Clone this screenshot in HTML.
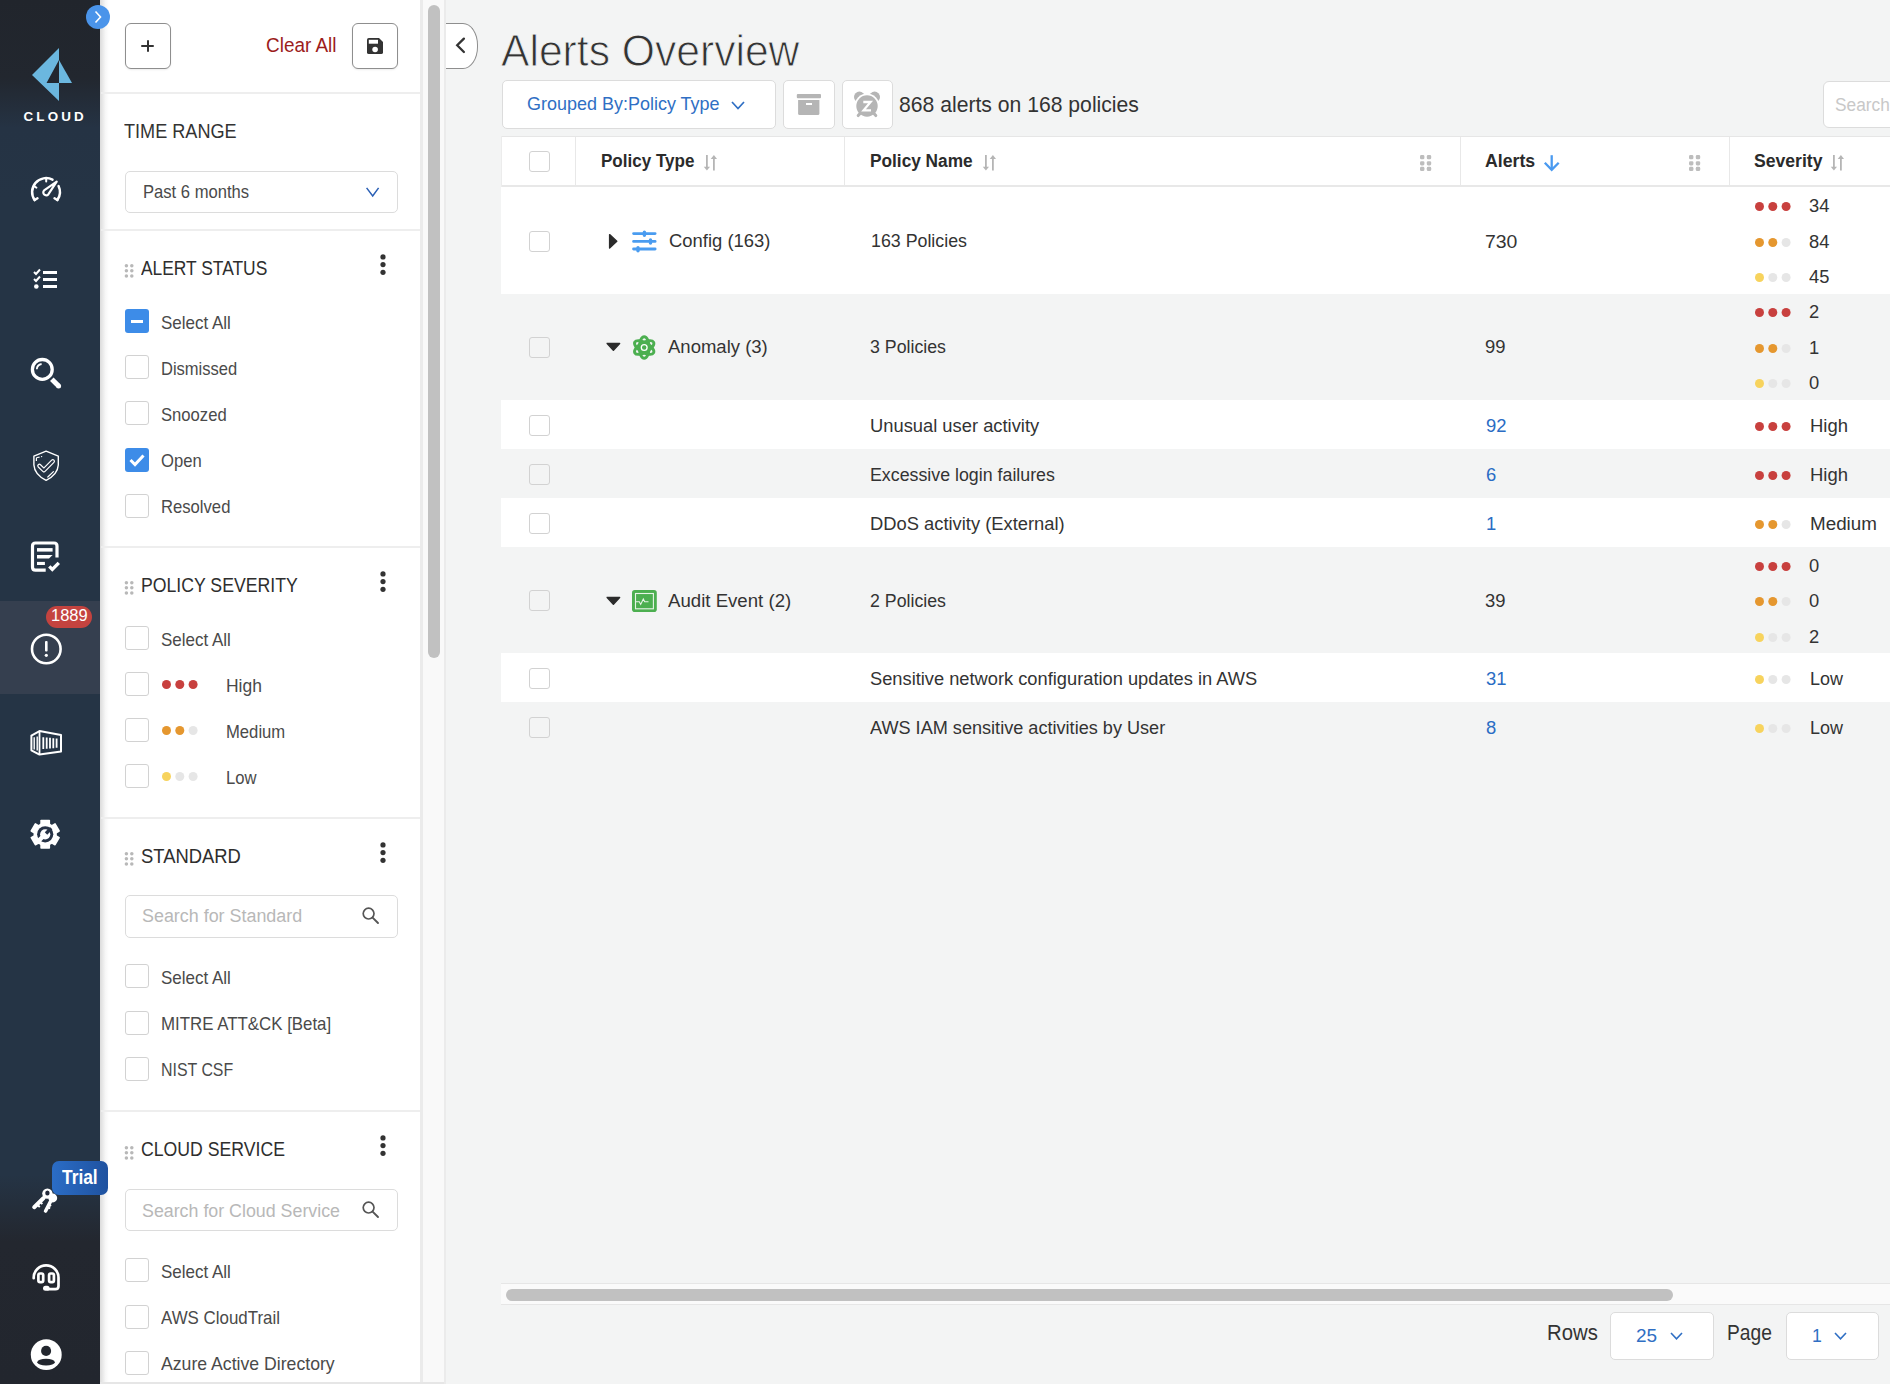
<!DOCTYPE html><html><head><meta charset="utf-8"><style>
*{box-sizing:border-box;margin:0;padding:0}
html,body{width:1890px;height:1384px;overflow:hidden;background:#f3f4f4;font-family:"Liberation Sans",sans-serif;color:#333}
.a{position:absolute}
svg{position:absolute;overflow:visible}
</style></head><body>
<div class="a" style="left:0px;top:0px;width:100px;height:1384px;background:linear-gradient(to bottom,#21252c 0px,#22272f 78px,#253344 128px,#253445 200px,#253445 1175px,#23272f 1242px,#22262e 1384px)"></div>
<div class="a" style="left:0px;top:601px;width:100px;height:93px;background:#353f4f"></div>
<div class="a" style="left:100px;top:0px;width:322px;height:1384px;background:#fff"></div>
<div class="a" style="left:100px;top:0px;width:9px;height:1384px;background:linear-gradient(to right,rgba(0,0,0,0.14),rgba(0,0,0,0.03) 60%,rgba(0,0,0,0))"></div>
<div class="a" style="left:420px;top:0px;width:24px;height:1384px;background:#f9f9f9"></div>
<div class="a" style="left:420px;top:0px;width:2.5px;height:1384px;background:#ebebeb"></div>
<div class="a" style="left:443.5px;top:0px;width:2px;height:1384px;background:#ebebeb"></div>
<div class="a" style="left:428px;top:5px;width:12px;height:653px;background:#c1c1c1;border-radius:6px"></div>
<div class="a" style="left:100px;top:1382px;width:344px;height:2px;background:#e6e6e6"></div>
<div class="a" style="left:101px;top:92px;width:319px;height:2px;background:#eeeeee"></div>
<div class="a" style="left:101px;top:229px;width:319px;height:2px;background:#eeeeee"></div>
<div class="a" style="left:101px;top:546px;width:319px;height:2px;background:#eeeeee"></div>
<div class="a" style="left:101px;top:817px;width:319px;height:2px;background:#eeeeee"></div>
<div class="a" style="left:101px;top:1110px;width:319px;height:2px;background:#eeeeee"></div>
<div class="a" style="left:125px;top:23px;width:46px;height:46px;border:1.5px solid #8e8e8e;border-radius:6px;background:#fff;box-shadow:0 1px 2px rgba(0,0,0,0.08)"></div>
<div class="a" style="left:352px;top:23px;width:46px;height:46px;border:1.5px solid #8e8e8e;border-radius:6px;background:#fff;box-shadow:0 1px 2px rgba(0,0,0,0.08)"></div>
<div class="a" style="left:141.2px;top:45px;width:12.6px;height:2.1px;background:#333;border-radius:1px"></div>
<div class="a" style="left:146.6px;top:39.9px;width:2.1px;height:12.4px;background:#333;border-radius:1px"></div>
<svg style="left:367px;top:38px" width="17" height="17" viewBox="0 0 17 17"><path d="M1.8 0 H12 L16 4 V14.2 Q16 16.1 14.2 16.1 H1.8 Q0 16.1 0 14.2 V1.8 Q0 0 1.8 0 Z" fill="#333"/><rect x="1.8" y="1.8" width="9.2" height="3.9" fill="#fff"/><circle cx="8.1" cy="11.5" r="2.8" fill="#fff"/></svg>
<div class="a" style="left:265.7px;top:35.82px;font-size:19.7px;line-height:1;color:#9c1c1c;font-weight:400;white-space:nowrap;transform-origin:0 0;transform:scaleX(0.9616)">Clear All</div>
<div class="a" style="left:123.8px;top:122.18px;font-size:19.4px;line-height:1;color:#333;font-weight:400;white-space:nowrap;transform-origin:0 0;transform:scaleX(0.9339)">TIME RANGE</div>
<div class="a" style="left:125px;top:171px;width:273px;height:42px;border:1.5px solid #dcdcdc;border-radius:5px;background:#fff"></div>
<div class="a" style="left:143.0px;top:183.95px;font-size:17.9px;line-height:1;color:#4a4a4a;font-weight:400;white-space:nowrap;transform-origin:0 0;transform:scaleX(0.9278)">Past 6 months</div>
<svg style="left:365.5px;top:187px" width="14" height="10" viewBox="0 0 14 10"><path d="M0.6 0.9 L6.7 8.9 L12.6 0.9" fill="none" stroke="#2a5fb5" stroke-width="1.5"/></svg>
<svg style="left:124px;top:264.4px" width="10" height="14" viewBox="0 0 10 14"><circle cx="2.4" cy="1.8" r="1.75" fill="#b8b8b8"/><circle cx="2.4" cy="6.85" r="1.75" fill="#b8b8b8"/><circle cx="2.4" cy="11.9" r="1.75" fill="#b8b8b8"/><circle cx="7.800000000000001" cy="1.8" r="1.75" fill="#b8b8b8"/><circle cx="7.800000000000001" cy="6.85" r="1.75" fill="#b8b8b8"/><circle cx="7.800000000000001" cy="11.9" r="1.75" fill="#b8b8b8"/></svg>
<div class="a" style="left:140.8px;top:258.82px;font-size:19.7px;line-height:1;color:#2e2e2e;font-weight:400;white-space:nowrap;transform-origin:0 0;transform:scaleX(0.8834)">ALERT STATUS</div>
<svg style="left:380px;top:253.89999999999998px" width="6" height="21" viewBox="0 0 6 21"><circle cx="3" cy="2.9" r="2.6" fill="#333"/><circle cx="3" cy="10.6" r="2.6" fill="#333"/><circle cx="3" cy="18.3" r="2.6" fill="#333"/></svg>
<div class="a" style="left:125px;top:309px;width:24px;height:24px;background:#3d8ce8;border-radius:3px"></div>
<div class="a" style="left:131px;top:319.5px;width:12px;height:3px;background:#fff"></div>
<div class="a" style="left:161.3px;top:313.52px;font-size:18.4px;line-height:1;color:#4a4a4a;font-weight:400;white-space:nowrap;transform-origin:0 0;transform:scaleX(0.9239)">Select All</div>
<div class="a" style="left:125px;top:355px;width:24px;height:24px;border:1.5px solid #d2d2d2;border-radius:3px;background:#fff"></div>
<div class="a" style="left:161.3px;top:359.72px;font-size:18.4px;line-height:1;color:#4a4a4a;font-weight:400;white-space:nowrap;transform-origin:0 0;transform:scaleX(0.8983)">Dismissed</div>
<div class="a" style="left:125px;top:401px;width:24px;height:24px;border:1.5px solid #d2d2d2;border-radius:3px;background:#fff"></div>
<div class="a" style="left:161.3px;top:405.92px;font-size:18.4px;line-height:1;color:#4a4a4a;font-weight:400;white-space:nowrap;transform-origin:0 0;transform:scaleX(0.9050)">Snoozed</div>
<div class="a" style="left:125px;top:448px;width:24px;height:24px;background:#3d8ce8;border-radius:3px"></div>
<svg style="left:125px;top:448px" width="24" height="24" viewBox="0 0 24 24"><path d="M5.5 12 L10 16.5 L18.5 7.5" fill="none" stroke="#fff" stroke-width="3"/></svg>
<div class="a" style="left:161.3px;top:452.12px;font-size:18.4px;line-height:1;color:#4a4a4a;font-weight:400;white-space:nowrap;transform-origin:0 0;transform:scaleX(0.9050)">Open</div>
<div class="a" style="left:125px;top:494px;width:24px;height:24px;border:1.5px solid #d2d2d2;border-radius:3px;background:#fff"></div>
<div class="a" style="left:161.3px;top:498.32px;font-size:18.4px;line-height:1;color:#4a4a4a;font-weight:400;white-space:nowrap;transform-origin:0 0;transform:scaleX(0.9050)">Resolved</div>
<svg style="left:124px;top:581.3px" width="10" height="14" viewBox="0 0 10 14"><circle cx="2.4" cy="1.8" r="1.75" fill="#b8b8b8"/><circle cx="2.4" cy="6.85" r="1.75" fill="#b8b8b8"/><circle cx="2.4" cy="11.9" r="1.75" fill="#b8b8b8"/><circle cx="7.800000000000001" cy="1.8" r="1.75" fill="#b8b8b8"/><circle cx="7.800000000000001" cy="6.85" r="1.75" fill="#b8b8b8"/><circle cx="7.800000000000001" cy="11.9" r="1.75" fill="#b8b8b8"/></svg>
<div class="a" style="left:140.8px;top:575.72px;font-size:19.7px;line-height:1;color:#2e2e2e;font-weight:400;white-space:nowrap;transform-origin:0 0;transform:scaleX(0.8970)">POLICY SEVERITY</div>
<svg style="left:380px;top:570.8px" width="6" height="21" viewBox="0 0 6 21"><circle cx="3" cy="2.9" r="2.6" fill="#333"/><circle cx="3" cy="10.6" r="2.6" fill="#333"/><circle cx="3" cy="18.3" r="2.6" fill="#333"/></svg>
<div class="a" style="left:125px;top:626px;width:24px;height:24px;border:1.5px solid #d2d2d2;border-radius:3px;background:#fff"></div>
<div class="a" style="left:161.3px;top:630.82px;font-size:18.4px;line-height:1;color:#4a4a4a;font-weight:400;white-space:nowrap;transform-origin:0 0;transform:scaleX(0.9226)">Select All</div>
<div class="a" style="left:125px;top:672px;width:24px;height:24px;border:1.5px solid #d2d2d2;border-radius:3px;background:#fff"></div>
<svg style="left:161.5px;top:680.0px" width="36" height="9" viewBox="0 0 36 9"><circle cx="4.5" cy="4.5" r="4.5" fill="#c8403e"/><circle cx="17.8" cy="4.5" r="4.5" fill="#c8403e"/><circle cx="31.1" cy="4.5" r="4.5" fill="#c8403e"/></svg>
<div class="a" style="left:225.8px;top:676.52px;font-size:18.4px;line-height:1;color:#4a4a4a;font-weight:400;white-space:nowrap;transform-origin:0 0;transform:scaleX(0.9490)">High</div>
<div class="a" style="left:125px;top:718px;width:24px;height:24px;border:1.5px solid #d2d2d2;border-radius:3px;background:#fff"></div>
<svg style="left:161.5px;top:726.0px" width="36" height="9" viewBox="0 0 36 9"><circle cx="4.5" cy="4.5" r="4.5" fill="#e5972f"/><circle cx="17.8" cy="4.5" r="4.5" fill="#e5972f"/><circle cx="31.1" cy="4.5" r="4.5" fill="#e6e6e6"/></svg>
<div class="a" style="left:225.8px;top:722.72px;font-size:18.4px;line-height:1;color:#4a4a4a;font-weight:400;white-space:nowrap;transform-origin:0 0;transform:scaleX(0.9050)">Medium</div>
<div class="a" style="left:125px;top:764px;width:24px;height:24px;border:1.5px solid #d2d2d2;border-radius:3px;background:#fff"></div>
<svg style="left:161.5px;top:772.0px" width="36" height="9" viewBox="0 0 36 9"><circle cx="4.5" cy="4.5" r="4.5" fill="#f7d35d"/><circle cx="17.8" cy="4.5" r="4.5" fill="#e6e6e6"/><circle cx="31.1" cy="4.5" r="4.5" fill="#e6e6e6"/></svg>
<div class="a" style="left:225.8px;top:768.92px;font-size:18.4px;line-height:1;color:#4a4a4a;font-weight:400;white-space:nowrap;transform-origin:0 0;transform:scaleX(0.9050)">Low</div>
<svg style="left:124px;top:852.1px" width="10" height="14" viewBox="0 0 10 14"><circle cx="2.4" cy="1.8" r="1.75" fill="#b8b8b8"/><circle cx="2.4" cy="6.85" r="1.75" fill="#b8b8b8"/><circle cx="2.4" cy="11.9" r="1.75" fill="#b8b8b8"/><circle cx="7.800000000000001" cy="1.8" r="1.75" fill="#b8b8b8"/><circle cx="7.800000000000001" cy="6.85" r="1.75" fill="#b8b8b8"/><circle cx="7.800000000000001" cy="11.9" r="1.75" fill="#b8b8b8"/></svg>
<div class="a" style="left:140.8px;top:846.52px;font-size:19.7px;line-height:1;color:#2e2e2e;font-weight:400;white-space:nowrap;transform-origin:0 0;transform:scaleX(0.9350)">STANDARD</div>
<svg style="left:380px;top:841.6px" width="6" height="21" viewBox="0 0 6 21"><circle cx="3" cy="2.9" r="2.6" fill="#333"/><circle cx="3" cy="10.6" r="2.6" fill="#333"/><circle cx="3" cy="18.3" r="2.6" fill="#333"/></svg>
<div class="a" style="left:125px;top:895px;width:273px;height:43px;border:1.5px solid #dcdcdc;border-radius:5px;background:#fff"></div>
<div class="a" style="left:142.0px;top:907.19px;font-size:18.8px;line-height:1;color:#b8b8b8;font-weight:400;white-space:nowrap;transform-origin:0 0;transform:scaleX(0.9530)">Search for Standard</div>
<svg style="left:362px;top:907.3px" width="17" height="17" viewBox="0 0 17 17"><circle cx="6.6" cy="6.6" r="5.4" fill="none" stroke="#555" stroke-width="1.7"/><path d="M10.6 10.6 L16 16" stroke="#555" stroke-width="1.9" stroke-linecap="round"/></svg>
<div class="a" style="left:125px;top:964px;width:24px;height:24px;border:1.5px solid #d2d2d2;border-radius:3px;background:#fff"></div>
<div class="a" style="left:161.3px;top:969.02px;font-size:18.4px;line-height:1;color:#4a4a4a;font-weight:400;white-space:nowrap;transform-origin:0 0;transform:scaleX(0.9239)">Select All</div>
<div class="a" style="left:125px;top:1011px;width:24px;height:24px;border:1.5px solid #d2d2d2;border-radius:3px;background:#fff"></div>
<div class="a" style="left:161.3px;top:1015.22px;font-size:18.4px;line-height:1;color:#4a4a4a;font-weight:400;white-space:nowrap;transform-origin:0 0;transform:scaleX(0.9167)">MITRE ATT&amp;CK [Beta]</div>
<div class="a" style="left:125px;top:1057px;width:24px;height:24px;border:1.5px solid #d2d2d2;border-radius:3px;background:#fff"></div>
<div class="a" style="left:161.3px;top:1061.42px;font-size:18.4px;line-height:1;color:#4a4a4a;font-weight:400;white-space:nowrap;transform-origin:0 0;transform:scaleX(0.8652)">NIST CSF</div>
<svg style="left:124px;top:1145.7px" width="10" height="14" viewBox="0 0 10 14"><circle cx="2.4" cy="1.8" r="1.75" fill="#b8b8b8"/><circle cx="2.4" cy="6.85" r="1.75" fill="#b8b8b8"/><circle cx="2.4" cy="11.9" r="1.75" fill="#b8b8b8"/><circle cx="7.800000000000001" cy="1.8" r="1.75" fill="#b8b8b8"/><circle cx="7.800000000000001" cy="6.85" r="1.75" fill="#b8b8b8"/><circle cx="7.800000000000001" cy="11.9" r="1.75" fill="#b8b8b8"/></svg>
<div class="a" style="left:140.8px;top:1140.12px;font-size:19.7px;line-height:1;color:#2e2e2e;font-weight:400;white-space:nowrap;transform-origin:0 0;transform:scaleX(0.8974)">CLOUD SERVICE</div>
<svg style="left:380px;top:1135.2px" width="6" height="21" viewBox="0 0 6 21"><circle cx="3" cy="2.9" r="2.6" fill="#333"/><circle cx="3" cy="10.6" r="2.6" fill="#333"/><circle cx="3" cy="18.3" r="2.6" fill="#333"/></svg>
<div class="a" style="left:125px;top:1189px;width:273px;height:42px;border:1.5px solid #dcdcdc;border-radius:5px;background:#fff"></div>
<div class="a" style="left:142.2px;top:1201.59px;font-size:18.8px;line-height:1;color:#b8b8b8;font-weight:400;white-space:nowrap;transform-origin:0 0;transform:scaleX(0.9484)">Search for Cloud Service</div>
<svg style="left:362px;top:1200.8px" width="17" height="17" viewBox="0 0 17 17"><circle cx="6.6" cy="6.6" r="5.4" fill="none" stroke="#555" stroke-width="1.7"/><path d="M10.6 10.6 L16 16" stroke="#555" stroke-width="1.9" stroke-linecap="round"/></svg>
<div class="a" style="left:125px;top:1258px;width:24px;height:24px;border:1.5px solid #d2d2d2;border-radius:3px;background:#fff"></div>
<div class="a" style="left:161.3px;top:1263.02px;font-size:18.4px;line-height:1;color:#4a4a4a;font-weight:400;white-space:nowrap;transform-origin:0 0;transform:scaleX(0.9239)">Select All</div>
<div class="a" style="left:125px;top:1305px;width:24px;height:24px;border:1.5px solid #d2d2d2;border-radius:3px;background:#fff"></div>
<div class="a" style="left:161.3px;top:1309.22px;font-size:18.4px;line-height:1;color:#4a4a4a;font-weight:400;white-space:nowrap;transform-origin:0 0;transform:scaleX(0.9193)">AWS CloudTrail</div>
<div class="a" style="left:125px;top:1351px;width:24px;height:24px;border:1.5px solid #d2d2d2;border-radius:3px;background:#fff"></div>
<div class="a" style="left:161.3px;top:1355.42px;font-size:18.4px;line-height:1;color:#4a4a4a;font-weight:400;white-space:nowrap;transform-origin:0 0;transform:scaleX(0.9602)">Azure Active Directory</div>
<div class="a" style="left:445.5px;top:23.2px;width:32.5px;height:45.8px;background:#fff;border:1.5px solid #8e8e8e;border-left:none;border-radius:0 15px 15px 0 / 0 22px 22px 0"></div>
<svg style="left:455px;top:37px" width="11" height="17" viewBox="0 0 11 17"><path d="M8.9 1.6 L2.2 8.3 L8.9 15" fill="none" stroke="#333" stroke-width="2.3" stroke-linecap="round"/></svg>
<div class="a" style="left:500.7px;top:28.85px;font-size:44px;line-height:1;color:#333;-webkit-text-stroke:0.9px #f3f4f4;font-weight:400;white-space:nowrap;transform-origin:0 0;transform:scaleX(0.9686)">Alerts Overview</div>
<div class="a" style="left:502px;top:80px;width:274px;height:49px;background:#fff;border:1.5px solid #dcdcdc;border-radius:5px"></div>
<div class="a" style="left:526.9px;top:94.62px;font-size:18.4px;line-height:1;color:#2f6fc4;font-weight:400;white-space:nowrap;transform-origin:0 0;transform:scaleX(0.9778)">Grouped By:Policy Type</div>
<svg style="left:731px;top:101px" width="14" height="9" viewBox="0 0 14 9"><path d="M1 1 L7 7.5 L13 1" fill="none" stroke="#2f6fc4" stroke-width="1.7"/></svg>
<div class="a" style="left:783px;top:80px;width:52px;height:49px;background:#fff;border:1.5px solid #dcdcdc;border-radius:5px"></div>
<div class="a" style="left:842px;top:80px;width:51px;height:49px;background:#fff;border:1.5px solid #dcdcdc;border-radius:5px"></div>
<svg style="left:796px;top:93px" width="26" height="24" viewBox="0 0 26 24"><rect x="0.8" y="0.9" width="24.2" height="4.4" rx="1" fill="#b5b5b5"/><path d="M2.1 6.9 H23.4 V20.6 Q23.4 22.1 21.9 22.1 H3.6 Q2.1 22.1 2.1 20.6 Z" fill="#b5b5b5"/><rect x="10" y="10" width="6" height="2" fill="#fff"/></svg>
<svg style="left:850px;top:90px" width="34" height="30" viewBox="0 0 34 30"><circle cx="9.4" cy="7" r="5.4" fill="#b5b5b5"/><circle cx="24.6" cy="7" r="5.4" fill="#b5b5b5"/><circle cx="17" cy="16" r="12.4" fill="#fff"/><path d="M10.5 23 L8.2 25.6" stroke="#b5b5b5" stroke-width="3" stroke-linecap="round"/><path d="M23.5 23 L25.8 25.6" stroke="#b5b5b5" stroke-width="3" stroke-linecap="round"/><circle cx="17" cy="16" r="10.7" fill="#b5b5b5"/><path d="M13.3 12 H20.6 L13.6 20.3 H21" fill="none" stroke="#fff" stroke-width="2.3" stroke-linejoin="miter"/></svg>
<div class="a" style="left:899.3px;top:93.51px;font-size:22.2px;line-height:1;color:#333;font-weight:400;white-space:nowrap;transform-origin:0 0;transform:scaleX(0.9534)">868 alerts on 168 policies</div>
<div class="a" style="left:1823px;top:81px;width:80px;height:47px;background:#fff;border:1.5px solid #dcdcdc;border-radius:6px"></div>
<div class="a" style="left:1835.0px;top:96.09px;font-size:18.8px;line-height:1;color:#c8c8c8;font-weight:400;white-space:nowrap;transform-origin:0 0;transform:scaleX(0.9200)">Search</div>
<div class="a" style="left:501px;top:136px;width:1389px;height:51px;background:#fff;border-top:1px solid #e6e6e6;border-bottom:2px solid #e8e8e8"></div>
<div class="a" style="left:575px;top:137px;width:1px;height:48px;background:#e8e8e8"></div>
<div class="a" style="left:844px;top:137px;width:1px;height:48px;background:#e8e8e8"></div>
<div class="a" style="left:1460px;top:137px;width:1px;height:48px;background:#e8e8e8"></div>
<div class="a" style="left:1729px;top:137px;width:1px;height:48px;background:#e8e8e8"></div>
<div class="a" style="left:501px;top:136px;width:1px;height:615px;background:#ececec"></div>
<div class="a" style="left:529px;top:151px;width:21px;height:21px;border:1.5px solid #d2d2d2;border-radius:3px;background:transparent"></div>
<div class="a" style="left:600.9px;top:152.39px;font-size:18.8px;line-height:1;color:#2b2b2b;font-weight:700;white-space:nowrap;transform-origin:0 0;transform:scaleX(0.9068)">Policy Type</div>
<svg style="left:703px;top:155px" width="15" height="16" viewBox="0 0 15 16"><path d="M3.9 0 V12.5" stroke="#b5b5b5" stroke-width="1.8"/><path d="M0.8 11.7 H7 L3.9 15.5 Z" fill="#b5b5b5"/><path d="M10.9 15.5 V3" stroke="#b5b5b5" stroke-width="1.8"/><path d="M7.7 3.9 H14 L10.9 0.1 Z" fill="#b5b5b5"/></svg>
<div class="a" style="left:870.4px;top:152.39px;font-size:18.8px;line-height:1;color:#2b2b2b;font-weight:700;white-space:nowrap;transform-origin:0 0;transform:scaleX(0.9185)">Policy Name</div>
<svg style="left:982px;top:155px" width="15" height="16" viewBox="0 0 15 16"><path d="M3.9 0 V12.5" stroke="#b5b5b5" stroke-width="1.8"/><path d="M0.8 11.7 H7 L3.9 15.5 Z" fill="#b5b5b5"/><path d="M10.9 15.5 V3" stroke="#b5b5b5" stroke-width="1.8"/><path d="M7.7 3.9 H14 L10.9 0.1 Z" fill="#b5b5b5"/></svg>
<svg style="left:1420px;top:154.7px" width="12" height="17" viewBox="0 0 12 17"><rect x="0" y="0" width="4.4" height="4.3" rx="1.4" fill="#bdbdbd"/><rect x="0" y="6.2" width="4.4" height="4.3" rx="1.4" fill="#bdbdbd"/><rect x="0" y="11.8" width="4.4" height="4.3" rx="1.4" fill="#bdbdbd"/><rect x="6.8" y="0" width="4.4" height="4.3" rx="1.4" fill="#bdbdbd"/><rect x="6.8" y="6.2" width="4.4" height="4.3" rx="1.4" fill="#bdbdbd"/><rect x="6.8" y="11.8" width="4.4" height="4.3" rx="1.4" fill="#bdbdbd"/></svg>
<div class="a" style="left:1485.0px;top:152.39px;font-size:18.8px;line-height:1;color:#2b2b2b;font-weight:700;white-space:nowrap;transform-origin:0 0;transform:scaleX(0.9427)">Alerts</div>
<svg style="left:1543px;top:154px" width="18" height="18" viewBox="0 0 18 18"><path d="M8.7 1.2 V15.5" stroke="#4a9af0" stroke-width="2.3"/><path d="M1.8 8.8 L8.7 15.9 L15.7 8.8" fill="none" stroke="#4a9af0" stroke-width="2.3"/></svg>
<svg style="left:1689px;top:154.7px" width="12" height="17" viewBox="0 0 12 17"><rect x="0" y="0" width="4.4" height="4.3" rx="1.4" fill="#bdbdbd"/><rect x="0" y="6.2" width="4.4" height="4.3" rx="1.4" fill="#bdbdbd"/><rect x="0" y="11.8" width="4.4" height="4.3" rx="1.4" fill="#bdbdbd"/><rect x="6.8" y="0" width="4.4" height="4.3" rx="1.4" fill="#bdbdbd"/><rect x="6.8" y="6.2" width="4.4" height="4.3" rx="1.4" fill="#bdbdbd"/><rect x="6.8" y="11.8" width="4.4" height="4.3" rx="1.4" fill="#bdbdbd"/></svg>
<div class="a" style="left:1753.7px;top:152.39px;font-size:18.8px;line-height:1;color:#2b2b2b;font-weight:700;white-space:nowrap;transform-origin:0 0;transform:scaleX(0.9372)">Severity</div>
<svg style="left:1830px;top:155px" width="15" height="16" viewBox="0 0 15 16"><path d="M3.9 0 V12.5" stroke="#b5b5b5" stroke-width="1.8"/><path d="M0.8 11.7 H7 L3.9 15.5 Z" fill="#b5b5b5"/><path d="M10.9 15.5 V3" stroke="#b5b5b5" stroke-width="1.8"/><path d="M7.7 3.9 H14 L10.9 0.1 Z" fill="#b5b5b5"/></svg>
<div class="a" style="left:501px;top:187px;width:1389px;height:107px;background:#fff"></div>
<div class="a" style="left:501px;top:294px;width:1389px;height:106px;background:#f3f4f4"></div>
<div class="a" style="left:501px;top:400px;width:1389px;height:49px;background:#fff"></div>
<div class="a" style="left:501px;top:449px;width:1389px;height:49px;background:#f3f4f4"></div>
<div class="a" style="left:501px;top:498px;width:1389px;height:49px;background:#fff"></div>
<div class="a" style="left:501px;top:547px;width:1389px;height:106px;background:#f3f4f4"></div>
<div class="a" style="left:501px;top:653px;width:1389px;height:49px;background:#fff"></div>
<div class="a" style="left:501px;top:702px;width:1389px;height:50px;background:#f3f4f4"></div>
<div class="a" style="left:529px;top:231px;width:21px;height:21px;border:1.5px solid #d2d2d2;border-radius:3px;background:transparent"></div>
<svg style="left:608px;top:233px" width="11" height="17" viewBox="0 0 11 17"><path d="M1.6 1.6 L8.8 8.3 L1.6 15 Z" fill="#2b2b2b" stroke="#2b2b2b" stroke-width="1.4" stroke-linejoin="round"/></svg>
<svg style="left:632px;top:230px" width="26" height="23" viewBox="0 0 26 23"><g stroke="#4a9cf0" stroke-linecap="round"><path d="M1.6 3.6 H23.1 M1.6 11.4 H23.1 M1.6 19 H23.1" stroke-width="2.9"/><path d="M12.4 2.2 V5.2 M18.5 9.9 V13 M6 17.7 V20.7" stroke-width="3.4"/></g></svg>
<div class="a" style="left:668.8px;top:230.63px;font-size:19.1px;line-height:1;color:#333;font-weight:400;white-space:nowrap;transform-origin:0 0;transform:scaleX(0.9650)">Config (163)</div>
<div class="a" style="left:871.0px;top:231.33px;font-size:19.1px;line-height:1;color:#333;font-weight:400;white-space:nowrap;transform-origin:0 0;transform:scaleX(0.9323)">163 Policies</div>
<div class="a" style="left:1485.1px;top:231.63px;font-size:19.1px;line-height:1;color:#333;font-weight:400;white-space:nowrap;transform-origin:0 0;transform:scaleX(1.0170)">730</div>
<svg style="left:1754.5px;top:202.0px" width="36" height="9" viewBox="0 0 36 9"><circle cx="4.5" cy="4.5" r="4.5" fill="#c8403e"/><circle cx="17.8" cy="4.5" r="4.5" fill="#c8403e"/><circle cx="31.1" cy="4.5" r="4.5" fill="#c8403e"/></svg>
<div class="a" style="left:1809.3px;top:196.13px;font-size:19.1px;line-height:1;color:#333;font-weight:400;white-space:nowrap;transform-origin:0 0;transform:scaleX(0.9600)">34</div>
<svg style="left:1754.5px;top:237.5px" width="36" height="9" viewBox="0 0 36 9"><circle cx="4.5" cy="4.5" r="4.5" fill="#e5972f"/><circle cx="17.8" cy="4.5" r="4.5" fill="#e5972f"/><circle cx="31.1" cy="4.5" r="4.5" fill="#e6e6e6"/></svg>
<div class="a" style="left:1809.3px;top:231.63px;font-size:19.1px;line-height:1;color:#333;font-weight:400;white-space:nowrap;transform-origin:0 0;transform:scaleX(0.9600)">84</div>
<svg style="left:1754.5px;top:273.0px" width="36" height="9" viewBox="0 0 36 9"><circle cx="4.5" cy="4.5" r="4.5" fill="#f7d35d"/><circle cx="17.8" cy="4.5" r="4.5" fill="#e6e6e6"/><circle cx="31.1" cy="4.5" r="4.5" fill="#e6e6e6"/></svg>
<div class="a" style="left:1809.3px;top:267.13px;font-size:19.1px;line-height:1;color:#333;font-weight:400;white-space:nowrap;transform-origin:0 0;transform:scaleX(0.9600)">45</div>
<div class="a" style="left:529px;top:337px;width:21px;height:21px;border:1.5px solid #d2d2d2;border-radius:3px;background:transparent"></div>
<svg style="left:605px;top:341px" width="17" height="11" viewBox="0 0 17 11"><path d="M2.2 2.4 H14.6 L8.4 9.2 Z" fill="#2b2b2b" stroke="#2b2b2b" stroke-width="1.5" stroke-linejoin="round"/></svg>
<svg style="left:632px;top:335px" width="25" height="26" viewBox="0 0 25 26"><g fill="none" stroke="#4caf50" stroke-width="2.9"><ellipse cx="12.2" cy="12.5" rx="10.8" ry="4.9" transform="rotate(90 12.2 12.5)"/><ellipse cx="12.2" cy="12.5" rx="10.8" ry="4.9" transform="rotate(30 12.2 12.5)"/><ellipse cx="12.2" cy="12.5" rx="10.8" ry="4.9" transform="rotate(-30 12.2 12.5)"/></g><circle cx="12.2" cy="12.5" r="4.8" fill="#4caf50"/><circle cx="12.2" cy="12.5" r="2.9" fill="none" stroke="#fff" stroke-width="1.3"/></svg>
<div class="a" style="left:668.3px;top:336.63px;font-size:19.1px;line-height:1;color:#333;font-weight:400;white-space:nowrap;transform-origin:0 0;transform:scaleX(0.9695)">Anomaly (3)</div>
<div class="a" style="left:870.3px;top:337.23px;font-size:19.1px;line-height:1;color:#333;font-weight:400;white-space:nowrap;transform-origin:0 0;transform:scaleX(0.9300)">3 Policies</div>
<div class="a" style="left:1485.1px;top:337.33px;font-size:19.1px;line-height:1;color:#333;font-weight:400;white-space:nowrap;transform-origin:0 0;transform:scaleX(0.9650)">99</div>
<svg style="left:1754.5px;top:308.0px" width="36" height="9" viewBox="0 0 36 9"><circle cx="4.5" cy="4.5" r="4.5" fill="#c8403e"/><circle cx="17.8" cy="4.5" r="4.5" fill="#c8403e"/><circle cx="31.1" cy="4.5" r="4.5" fill="#c8403e"/></svg>
<div class="a" style="left:1809.3px;top:302.13px;font-size:19.1px;line-height:1;color:#333;font-weight:400;white-space:nowrap;transform-origin:0 0;transform:scaleX(0.9600)">2</div>
<svg style="left:1754.5px;top:343.5px" width="36" height="9" viewBox="0 0 36 9"><circle cx="4.5" cy="4.5" r="4.5" fill="#e5972f"/><circle cx="17.8" cy="4.5" r="4.5" fill="#e5972f"/><circle cx="31.1" cy="4.5" r="4.5" fill="#e6e6e6"/></svg>
<div class="a" style="left:1809.3px;top:337.63px;font-size:19.1px;line-height:1;color:#333;font-weight:400;white-space:nowrap;transform-origin:0 0;transform:scaleX(0.9600)">1</div>
<svg style="left:1754.5px;top:379.0px" width="36" height="9" viewBox="0 0 36 9"><circle cx="4.5" cy="4.5" r="4.5" fill="#f7d35d"/><circle cx="17.8" cy="4.5" r="4.5" fill="#e6e6e6"/><circle cx="31.1" cy="4.5" r="4.5" fill="#e6e6e6"/></svg>
<div class="a" style="left:1809.3px;top:373.13px;font-size:19.1px;line-height:1;color:#333;font-weight:400;white-space:nowrap;transform-origin:0 0;transform:scaleX(0.9600)">0</div>
<div class="a" style="left:529px;top:414.5px;width:21px;height:21px;border:1.5px solid #d2d2d2;border-radius:3px;background:transparent"></div>
<div class="a" style="left:870.0px;top:416.43px;font-size:19.1px;line-height:1;color:#333;font-weight:400;white-space:nowrap;transform-origin:0 0;transform:scaleX(0.9604)">Unusual user activity</div>
<div class="a" style="left:1485.7px;top:416.43px;font-size:19.1px;line-height:1;color:#2a6cc4;font-weight:400;white-space:nowrap;transform-origin:0 0;transform:scaleX(0.9650)">92</div>
<svg style="left:1754.5px;top:421.8px" width="36" height="9" viewBox="0 0 36 9"><circle cx="4.5" cy="4.5" r="4.5" fill="#c8403e"/><circle cx="17.8" cy="4.5" r="4.5" fill="#c8403e"/><circle cx="31.1" cy="4.5" r="4.5" fill="#c8403e"/></svg>
<div class="a" style="left:1810.0px;top:416.43px;font-size:19.1px;line-height:1;color:#333;font-weight:400;white-space:nowrap;transform-origin:0 0;transform:scaleX(0.9674)">High</div>
<div class="a" style="left:529px;top:463.5px;width:21px;height:21px;border:1.5px solid #d2d2d2;border-radius:3px;background:transparent"></div>
<div class="a" style="left:870.0px;top:465.43px;font-size:19.1px;line-height:1;color:#333;font-weight:400;white-space:nowrap;transform-origin:0 0;transform:scaleX(0.9317)">Excessive login failures</div>
<div class="a" style="left:1485.7px;top:465.43px;font-size:19.1px;line-height:1;color:#2a6cc4;font-weight:400;white-space:nowrap;transform-origin:0 0;transform:scaleX(0.9650)">6</div>
<svg style="left:1754.5px;top:470.8px" width="36" height="9" viewBox="0 0 36 9"><circle cx="4.5" cy="4.5" r="4.5" fill="#c8403e"/><circle cx="17.8" cy="4.5" r="4.5" fill="#c8403e"/><circle cx="31.1" cy="4.5" r="4.5" fill="#c8403e"/></svg>
<div class="a" style="left:1810.0px;top:465.43px;font-size:19.1px;line-height:1;color:#333;font-weight:400;white-space:nowrap;transform-origin:0 0;transform:scaleX(0.9674)">High</div>
<div class="a" style="left:529px;top:512.5px;width:21px;height:21px;border:1.5px solid #d2d2d2;border-radius:3px;background:transparent"></div>
<div class="a" style="left:870.0px;top:514.43px;font-size:19.1px;line-height:1;color:#333;font-weight:400;white-space:nowrap;transform-origin:0 0;transform:scaleX(0.9607)">DDoS activity (External)</div>
<div class="a" style="left:1485.7px;top:514.43px;font-size:19.1px;line-height:1;color:#2a6cc4;font-weight:400;white-space:nowrap;transform-origin:0 0;transform:scaleX(0.9650)">1</div>
<svg style="left:1754.5px;top:519.8px" width="36" height="9" viewBox="0 0 36 9"><circle cx="4.5" cy="4.5" r="4.5" fill="#e5972f"/><circle cx="17.8" cy="4.5" r="4.5" fill="#e5972f"/><circle cx="31.1" cy="4.5" r="4.5" fill="#e6e6e6"/></svg>
<div class="a" style="left:1810.0px;top:514.43px;font-size:19.1px;line-height:1;color:#333;font-weight:400;white-space:nowrap;transform-origin:0 0;transform:scaleX(0.9850)">Medium</div>
<div class="a" style="left:529px;top:590px;width:21px;height:21px;border:1.5px solid #d2d2d2;border-radius:3px;background:transparent"></div>
<svg style="left:605px;top:595px" width="17" height="11" viewBox="0 0 17 11"><path d="M2.2 2.4 H14.6 L8.4 9.2 Z" fill="#2b2b2b" stroke="#2b2b2b" stroke-width="1.5" stroke-linejoin="round"/></svg>
<svg style="left:632px;top:589px" width="26" height="24" viewBox="0 0 26 24"><rect x="0" y="0.9" width="24.8" height="22.1" rx="2.8" fill="#4caf50"/><rect x="3.5" y="4.5" width="17.9" height="15.3" fill="none" stroke="#e8f4e8" stroke-width="1.1"/><path d="M4 12.8 H7.3 L8.7 15.4 L11.3 10 L12.7 12.7 H16.5" fill="none" stroke="#e8f4e8" stroke-width="1.1"/></svg>
<div class="a" style="left:668.0px;top:590.63px;font-size:19.1px;line-height:1;color:#333;font-weight:400;white-space:nowrap;transform-origin:0 0;transform:scaleX(0.9755)">Audit Event (2)</div>
<div class="a" style="left:870.3px;top:591.23px;font-size:19.1px;line-height:1;color:#333;font-weight:400;white-space:nowrap;transform-origin:0 0;transform:scaleX(0.9300)">2 Policies</div>
<div class="a" style="left:1485.1px;top:591.33px;font-size:19.1px;line-height:1;color:#333;font-weight:400;white-space:nowrap;transform-origin:0 0;transform:scaleX(0.9650)">39</div>
<svg style="left:1754.5px;top:561.5px" width="36" height="9" viewBox="0 0 36 9"><circle cx="4.5" cy="4.5" r="4.5" fill="#c8403e"/><circle cx="17.8" cy="4.5" r="4.5" fill="#c8403e"/><circle cx="31.1" cy="4.5" r="4.5" fill="#c8403e"/></svg>
<div class="a" style="left:1809.3px;top:555.63px;font-size:19.1px;line-height:1;color:#333;font-weight:400;white-space:nowrap;transform-origin:0 0;transform:scaleX(0.9600)">0</div>
<svg style="left:1754.5px;top:597.0px" width="36" height="9" viewBox="0 0 36 9"><circle cx="4.5" cy="4.5" r="4.5" fill="#e5972f"/><circle cx="17.8" cy="4.5" r="4.5" fill="#e5972f"/><circle cx="31.1" cy="4.5" r="4.5" fill="#e6e6e6"/></svg>
<div class="a" style="left:1809.3px;top:591.13px;font-size:19.1px;line-height:1;color:#333;font-weight:400;white-space:nowrap;transform-origin:0 0;transform:scaleX(0.9600)">0</div>
<svg style="left:1754.5px;top:632.5px" width="36" height="9" viewBox="0 0 36 9"><circle cx="4.5" cy="4.5" r="4.5" fill="#f7d35d"/><circle cx="17.8" cy="4.5" r="4.5" fill="#e6e6e6"/><circle cx="31.1" cy="4.5" r="4.5" fill="#e6e6e6"/></svg>
<div class="a" style="left:1809.3px;top:626.63px;font-size:19.1px;line-height:1;color:#333;font-weight:400;white-space:nowrap;transform-origin:0 0;transform:scaleX(0.9600)">2</div>
<div class="a" style="left:529px;top:667.5px;width:21px;height:21px;border:1.5px solid #d2d2d2;border-radius:3px;background:transparent"></div>
<div class="a" style="left:870.0px;top:669.43px;font-size:19.1px;line-height:1;color:#333;font-weight:400;white-space:nowrap;transform-origin:0 0;transform:scaleX(0.9567)">Sensitive network configuration updates in AWS</div>
<div class="a" style="left:1485.7px;top:669.43px;font-size:19.1px;line-height:1;color:#2a6cc4;font-weight:400;white-space:nowrap;transform-origin:0 0;transform:scaleX(0.9650)">31</div>
<svg style="left:1754.5px;top:674.8px" width="36" height="9" viewBox="0 0 36 9"><circle cx="4.5" cy="4.5" r="4.5" fill="#f7d35d"/><circle cx="17.8" cy="4.5" r="4.5" fill="#e6e6e6"/><circle cx="31.1" cy="4.5" r="4.5" fill="#e6e6e6"/></svg>
<div class="a" style="left:1810.0px;top:669.43px;font-size:19.1px;line-height:1;color:#333;font-weight:400;white-space:nowrap;transform-origin:0 0;transform:scaleX(0.9400)">Low</div>
<div class="a" style="left:529px;top:716.5px;width:21px;height:21px;border:1.5px solid #d2d2d2;border-radius:3px;background:transparent"></div>
<div class="a" style="left:870.0px;top:718.43px;font-size:19.1px;line-height:1;color:#333;font-weight:400;white-space:nowrap;transform-origin:0 0;transform:scaleX(0.9485)">AWS IAM sensitive activities by User</div>
<div class="a" style="left:1485.7px;top:718.43px;font-size:19.1px;line-height:1;color:#2a6cc4;font-weight:400;white-space:nowrap;transform-origin:0 0;transform:scaleX(0.9650)">8</div>
<svg style="left:1754.5px;top:723.8px" width="36" height="9" viewBox="0 0 36 9"><circle cx="4.5" cy="4.5" r="4.5" fill="#f7d35d"/><circle cx="17.8" cy="4.5" r="4.5" fill="#e6e6e6"/><circle cx="31.1" cy="4.5" r="4.5" fill="#e6e6e6"/></svg>
<div class="a" style="left:1810.0px;top:718.43px;font-size:19.1px;line-height:1;color:#333;font-weight:400;white-space:nowrap;transform-origin:0 0;transform:scaleX(0.9400)">Low</div>
<div class="a" style="left:501px;top:1283px;width:1389px;height:22px;background:#fafafa;border-top:1px solid #e6e6e6;border-bottom:1px solid #e6e6e6"></div>
<div class="a" style="left:506px;top:1289px;width:1167px;height:12px;background:#c1c1c1;border-radius:6px"></div>
<div class="a" style="left:1546.6px;top:1323.08px;font-size:21.4px;line-height:1;color:#333;font-weight:400;white-space:nowrap;transform-origin:0 0;transform:scaleX(0.9495)">Rows</div>
<div class="a" style="left:1610px;top:1312px;width:104px;height:48px;background:#fff;border:1.5px solid #dcdcdc;border-radius:5px"></div>
<div class="a" style="left:1635.9px;top:1326.92px;font-size:18.4px;line-height:1;color:#2f6fc4;font-weight:400;white-space:nowrap;transform-origin:0 0;transform:scaleX(1.0308)">25</div>
<svg style="left:1670px;top:1332px" width="13" height="8" viewBox="0 0 13 8"><path d="M1 1 L6.5 6.8 L12 1" fill="none" stroke="#2f6fc4" stroke-width="1.6"/></svg>
<div class="a" style="left:1727.3px;top:1323.08px;font-size:21.4px;line-height:1;color:#333;font-weight:400;white-space:nowrap;transform-origin:0 0;transform:scaleX(0.8986)">Page</div>
<div class="a" style="left:1786px;top:1312px;width:93px;height:48px;background:#fff;border:1.5px solid #dcdcdc;border-radius:5px"></div>
<div class="a" style="left:1811.6px;top:1326.92px;font-size:18.4px;line-height:1;color:#2f6fc4;font-weight:400;white-space:nowrap;transform-origin:0 0;transform:scaleX(0.9600)">1</div>
<svg style="left:1834px;top:1332px" width="13" height="8" viewBox="0 0 13 8"><path d="M1 1 L6.5 6.8 L12 1" fill="none" stroke="#2f6fc4" stroke-width="1.6"/></svg>
<svg style="left:0;top:0" width="100" height="130" viewBox="0 0 100 130"><path d="M59 48 L32 75 L59 101 L59 83 L46.5 83 L59 60 Z" fill="#6bb7df"/><path d="M59 60 L72 83 L59 83 Z" fill="#6bb7df"/></svg>
<div class="a" style="left:23.6px;top:109.9px;font-size:13.4px;line-height:1;color:#fff;font-weight:700;white-space:nowrap;letter-spacing:3.1px;">CLOUD</div>
<svg style="left:86px;top:5px" width="24" height="24" viewBox="0 0 24 24"><circle cx="12" cy="12" r="12" fill="#4a94ea"/><path d="M9.5 6.5 L14.5 12 L9.5 17.5" fill="none" stroke="#fff" stroke-width="1.6"/></svg>
<svg style="left:28px;top:172px" width="38" height="34" viewBox="0 0 38 34"><g fill="none" stroke="#fff" stroke-linecap="round" stroke-linejoin="round"><path d="M6.68 28.07 A13.9 13.9 0 0 1 24.5 7.73" stroke-width="2.5"/><path d="M30.55 14.02 A13.9 13.9 0 0 1 29.34 28.03" stroke-width="2.5"/><path d="M6.68 28.07 L9.5 26.3 M29.34 28.03 L26.5 26.3" stroke-width="2.4"/><path d="M18.2 6.8 V9.6 M5.8 14.2 L8.4 15.6" stroke-width="2"/><path d="M28.7 9.6 L20.3 22.4 A2.9 2.9 0 1 1 16.1 18.4 Z" stroke-width="2.2"/></g></svg>
<svg style="left:33px;top:268px" width="26" height="22" viewBox="0 0 26 22"><path d="M1 4 L3 6 L7 1.5" fill="none" stroke="#fff" stroke-width="2"/><path d="M1 11 L3 13 L7 8.5" fill="none" stroke="#fff" stroke-width="2"/><circle cx="3.3" cy="18.5" r="2.3" fill="#fff"/><rect x="10" y="3" width="14" height="3" fill="#fff"/><rect x="10" y="10" width="14" height="3" fill="#fff"/><rect x="10" y="17" width="14" height="3" fill="#fff"/></svg>
<svg style="left:26px;top:354px" width="40" height="40" viewBox="0 0 40 40"><circle cx="16.3" cy="15.4" r="9.9" fill="none" stroke="#fff" stroke-width="3.3"/><path d="M25.8 25.2 L32.4 31.8" stroke="#fff" stroke-width="5"/><circle cx="32.6" cy="32" r="2.5" fill="#fff"/><path d="M10.8 15.3 A5.6 5.6 0 0 1 15.6 10" fill="none" stroke="#fff" stroke-width="1.8"/></svg>
<svg style="left:28px;top:446px" width="36" height="40" viewBox="0 0 36 40"><path d="M18.1 5.2 L5.9 10.2 V19 Q6.5 28.5 18.1 34.4 Q29.7 28.5 30.3 19 V10.2 Z" fill="none" stroke="#fff" stroke-width="1.4" stroke-linejoin="round"/><path d="M11.4 19.9 L15.9 24.3 L24.8 15.3" fill="none" stroke="#fff" stroke-width="4.4" stroke-linecap="round" stroke-linejoin="round"/><path d="M11.4 19.9 L15.9 24.3 L24.8 15.3" fill="none" stroke="#263246" stroke-width="2" stroke-linecap="round" stroke-linejoin="round"/><path d="M8.4 15 V12.6 Q8.4 11.7 9.3 11.5 L11.6 11.1" fill="none" stroke="#fff" stroke-width="1.2"/><circle cx="13.6" cy="10.6" r="0.7" fill="#fff"/><path d="M19.8 31 L25.4 25.6" stroke="#fff" stroke-width="1.2" stroke-linecap="round"/></svg>
<svg style="left:26px;top:536px" width="38" height="40" viewBox="0 0 38 40"><path d="M19.7 34.2 H9.5 Q6.5 34.2 6.5 31.2 V10 Q6.5 7 9.5 7 H28 Q31 7 31 10 V21.5" fill="none" stroke="#fff" stroke-width="3.2"/><rect x="11" y="12.1" width="15.6" height="3.5" fill="#fff"/><path d="M11 18.9 H26.6 L23 22.5 H11 Z" fill="#fff"/><rect x="11" y="25.9" width="7.9" height="3.1" fill="#fff"/><path d="M23.3 30.4 L26.3 33.4 L32.8 26.9" fill="none" stroke="#fff" stroke-width="3.4"/></svg>
<svg style="left:30px;top:632px" width="33" height="34" viewBox="0 0 33 34"><circle cx="16.3" cy="17" r="14.3" fill="none" stroke="#fff" stroke-width="2.6"/><rect x="15" y="9" width="2.6" height="10.5" rx="1" fill="#fff"/><circle cx="16.3" cy="23.3" r="1.6" fill="#fff"/></svg>
<svg style="left:26px;top:724px" width="40" height="38" viewBox="0 0 40 38"><g fill="none" stroke="#fff" stroke-linejoin="round"><path d="M13.5 7.1 L35 11.1 V27.4 L13.5 30.6 L5.4 26.3 V11.6 Z" stroke-width="2"/><path d="M13.5 7.1 V30.6" stroke-width="1.8"/><path d="M8.2 13.2 V25.4 M11.2 12.4 V26.6" stroke-width="1.4"/></g><g stroke="#fff" stroke-width="1.8"><path d="M17.3 13.2 V25 M20.7 13.4 V24.8 M24 13.8 V24.6 M27.3 14.2 V24.2 M30.6 14.6 V23.8"/></g></svg>
<svg style="left:26px;top:814px" width="40" height="40" viewBox="0 0 40 40"><g transform="translate(19.2 20.3)"><circle r="11.6" fill="#fff"/><g fill="#fff"><rect x="-4.9" y="-14.5" width="9.8" height="6" rx="0.8" transform="rotate(0)"/><rect x="-4.9" y="-14.5" width="9.8" height="6" rx="0.8" transform="rotate(60)"/><rect x="-4.9" y="-14.5" width="9.8" height="6" rx="0.8" transform="rotate(120)"/><rect x="-4.9" y="-14.5" width="9.8" height="6" rx="0.8" transform="rotate(180)"/><rect x="-4.9" y="-14.5" width="9.8" height="6" rx="0.8" transform="rotate(240)"/><rect x="-4.9" y="-14.5" width="9.8" height="6" rx="0.8" transform="rotate(300)"/></g><circle r="8.1" fill="#263246"/><circle r="5.1" fill="#fff"/><path d="M0.8 -0.8 L6 -6" stroke="#263246" stroke-width="3.4"/><path d="M-1.5 1.5 L-8.5 8.5" stroke="#fff" stroke-width="4.4"/></g></svg>
<svg style="left:26px;top:1180px" width="40" height="40" viewBox="0 0 40 40"><circle cx="26.8" cy="18" r="4.4" fill="#fff"/><path d="M24.5 21.5 L19.6 31" stroke="#fff" stroke-width="3.6" stroke-linecap="round"/><path d="M21.6 27.2 L24.2 28.4 M22.8 24.8 L25.2 25.8" stroke="#fff" stroke-width="1.8"/><circle cx="21.4" cy="13.6" r="5.2" fill="#fff"/><ellipse cx="21.4" cy="13" rx="2.2" ry="2.6" fill="#23293a"/><path d="M17.6 18 L8.2 27.2" stroke="#fff" stroke-width="4" stroke-linecap="round"/><path d="M11.5 25 L13.8 27 M14.3 22.2 L16.4 24" stroke="#fff" stroke-width="2"/></svg>
<svg style="left:26px;top:1258px" width="40" height="40" viewBox="0 0 40 40"><g fill="none" stroke="#fff" stroke-width="2.7" stroke-linecap="round"><path d="M7.7 20.2 V19.7 A12.4 12.4 0 0 1 32.5 19.7 V28 Q32.5 31.2 29.3 31.2 H22"/><rect x="12.4" y="15.5" width="4.8" height="8.6" rx="1.6"/><rect x="23.1" y="15.5" width="4.8" height="8.6" rx="1.6"/></g><rect x="17" y="27.7" width="6.6" height="5" rx="2.5" fill="#fff"/></svg>
<svg style="left:26px;top:1334px" width="40" height="40" viewBox="0 0 40 40"><circle cx="20.25" cy="20.65" r="15.45" fill="#fff"/><circle cx="20.1" cy="16.9" r="5.05" fill="#22262e"/><ellipse cx="20.05" cy="28.2" rx="8.75" ry="3.4" fill="#22262e"/></svg>
<div class="a" style="left:46px;top:606px;width:46px;height:22px;background:#c4433f;border-radius:11px"></div>
<div class="a" style="left:50.7px;top:607.07px;font-size:17.4px;line-height:1;color:#fff;font-weight:400;white-space:nowrap;transform-origin:0 0;transform:scaleX(0.9486)">1889</div>
<div class="a" style="left:52px;top:1161px;width:56px;height:34px;background:linear-gradient(to right,#2b6dc6,#1f52a0);border-radius:7px"></div>
<div class="a" style="left:62.0px;top:1167.37px;font-size:20px;line-height:1;color:#fff;font-weight:700;white-space:nowrap;transform-origin:0 0;transform:scaleX(0.8678)">Trial</div>
</body></html>
